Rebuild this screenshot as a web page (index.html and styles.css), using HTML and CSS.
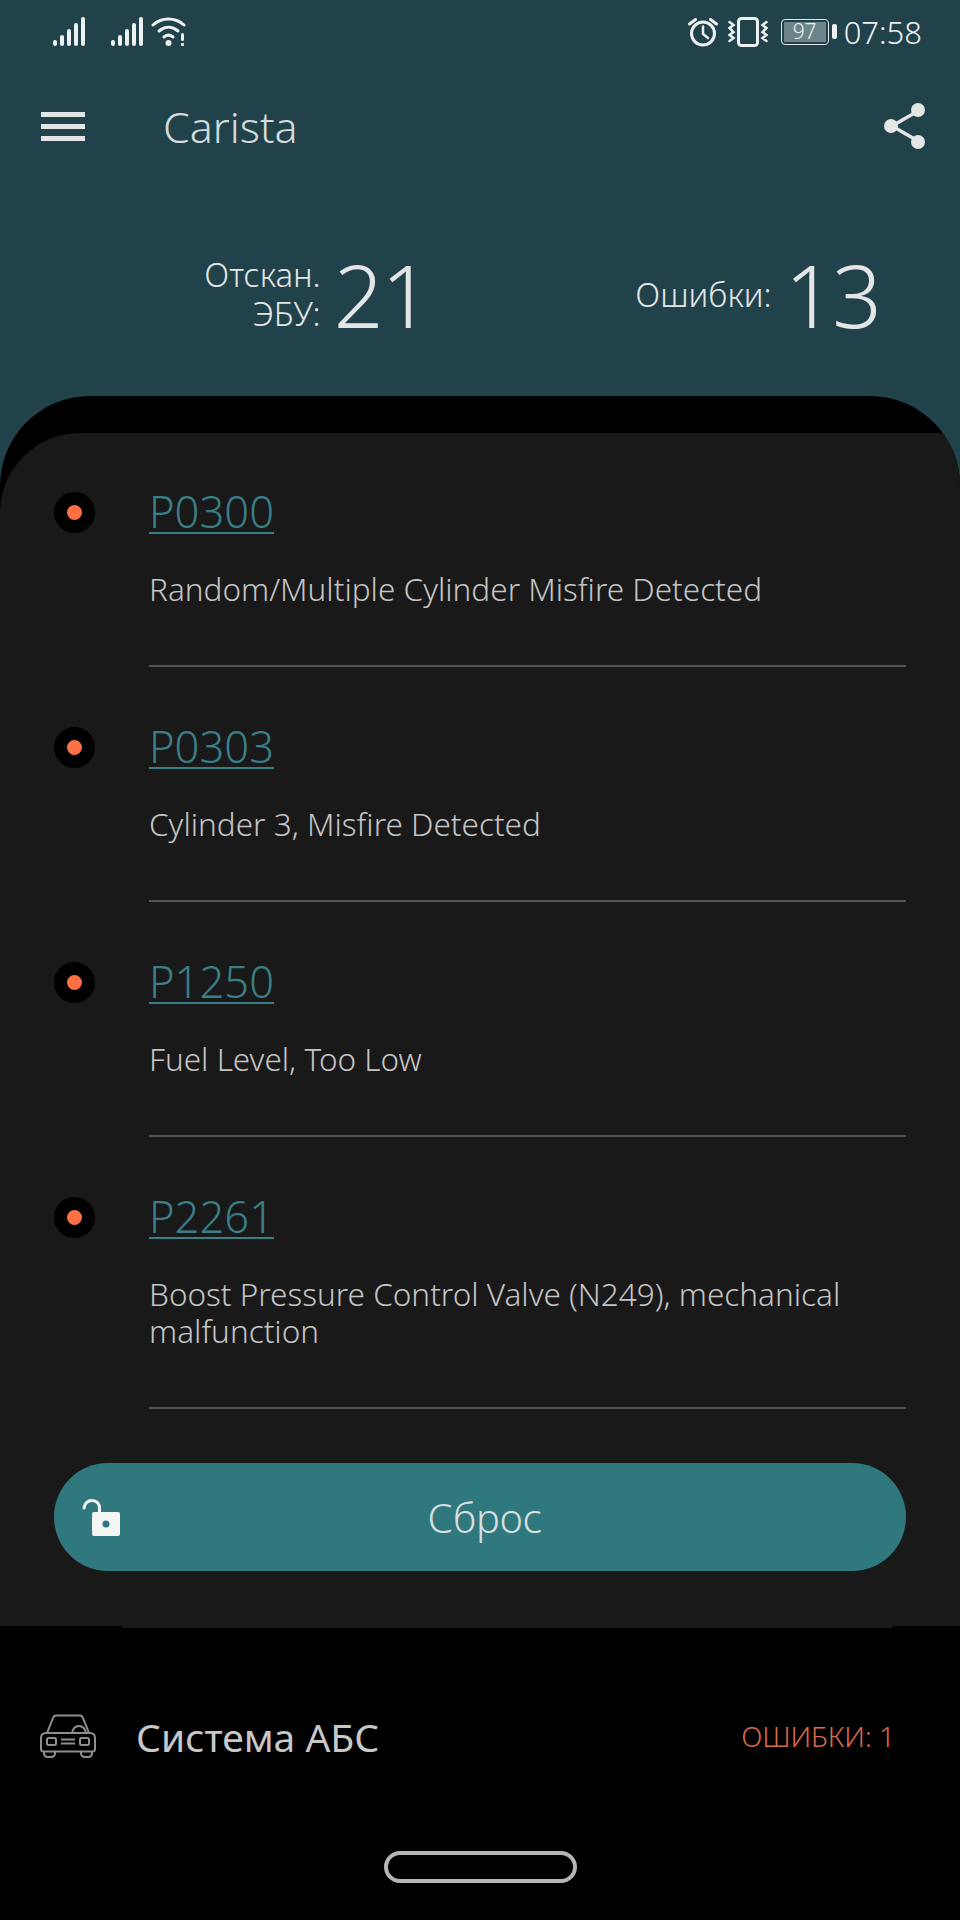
FILE: index.html
```html
<!DOCTYPE html>
<html lang="ru">
<head>
    <meta charset="UTF-8">
    <meta name="viewport" content="width=device-width, initial-scale=1.0">
    <title>Carista</title>
    <link rel="stylesheet" href="styles.css">
</head>
<body>
    <header class="top">
        <div class="status">
            <div class="status-left">
                <svg class="signal" width="32" height="30" viewBox="0 0 32 30"><g fill="#eef1f1"><rect x="0" y="23" width="4" height="6" rx="2"/><rect x="7" y="18" width="4" height="11" rx="2"/><rect x="14" y="12" width="4" height="17" rx="2"/><rect x="21" y="6" width="4" height="23" rx="2"/><rect x="28" y="0" width="4" height="29" rx="2"/></g></svg>
                <svg class="signal signal2" width="32" height="30" viewBox="0 0 32 30"><g fill="#eef1f1"><rect x="0" y="23" width="4" height="6" rx="2"/><rect x="7" y="18" width="4" height="11" rx="2"/><rect x="14" y="12" width="4" height="17" rx="2"/><rect x="21" y="6" width="4" height="23" rx="2"/><rect x="28" y="0" width="4" height="29" rx="2"/></g></svg>
                <svg class="wifi" width="36" height="30" viewBox="0 0 36 30"><g fill="none" stroke="#eef1f1" stroke-width="3" stroke-linecap="round"><path d="M2 8c9-8 22-8 31 0"/><path d="M8 14c6-5 13-5 19 0"/><path d="M13 20c3-2.500 6-2.500 9 0"/></g><circle cx="17.500" cy="26" r="3" fill="#eef1f1"/><rect x="30" y="16" width="3" height="8" rx="1.500" fill="#eef1f1"/><rect x="30" y="26" width="3" height="3" rx="1" fill="#eef1f1"/></svg>
            </div>
            <div class="status-right">
                <svg width="30" height="30" viewBox="0 0 30 30"><g fill="none" stroke="#eef1f1" stroke-linecap="round"><circle cx="15" cy="16.500" r="11.500" stroke-width="3"/><path d="M15 9.500v7.500l5 4" stroke-width="2.500"/><path d="M1.500 7l6-4.500M28.500 7l-6-4.500" stroke-width="3"/></g></svg>
                <svg class="vibrate" width="40" height="30" viewBox="0 0 40 30"><g fill="none" stroke="#eef1f1" stroke-linecap="round"><rect x="10.500" y="1.500" width="19" height="27" rx="3" stroke-width="3"/><path d="M1.500 5l4 3-4 3 4 4-4 3 4 3-4 3M38.500 5l-4 3 4 3-4 4 4 3-4 3 4 3" stroke-width="2.500"/></g></svg>
                <div class="battery"><span class="battery-level">97</span></div>
                <span class="clock">07:58</span>
            </div>
        </div>
        <div class="toolbar">
            <div class="menu"><i></i><i></i><i></i></div>
            <div class="title">Carista</div>
            <svg class="share" width="42" height="46" viewBox="0 0 42 46"><path d="M34 8L8 23l26 15" fill="none" stroke="#e4e6e6" stroke-width="3.500"/><g fill="#e4e6e6"><circle cx="34" cy="7" r="7"/><circle cx="7" cy="23" r="7"/><circle cx="34" cy="39" r="7"/></g></svg>
        </div>
        <div class="stats">
            <div class="stat stat-ecu"><span class="stat-label">Отскан.<br>ЭБУ:</span><span class="stat-num">21</span></div>
            <div class="stat stat-err"><span class="stat-label">Ошибки:</span><span class="stat-num">13</span></div>
        </div>
    </header>

    <main class="sheet">
        <div class="card">
            <div class="fault">
                <span class="dot"></span>
                <div class="fault-body">
                    <a class="code">P0300</a>
                    <p class="desc">Random/Multiple Cylinder Misfire Detected</p>
                </div>
            </div>
            <div class="fault">
                <span class="dot"></span>
                <div class="fault-body">
                    <a class="code">P0303</a>
                    <p class="desc">Cylinder 3, Misfire Detected</p>
                </div>
            </div>
            <div class="fault">
                <span class="dot"></span>
                <div class="fault-body">
                    <a class="code">P1250</a>
                    <p class="desc">Fuel Level, Too Low</p>
                </div>
            </div>
            <div class="fault">
                <span class="dot"></span>
                <div class="fault-body">
                    <a class="code">P2261</a>
                    <p class="desc">Boost Pressure Control Valve (N249), mechanical malfunction</p>
                </div>
            </div>
            <button class="reset" type="button">
                <svg class="lock" width="38" height="38" viewBox="0 0 38 38"><path d="M2 10c1-5 4-7.500 8-7.500 4.500 0 7.500 3 7.500 8v5" fill="none" stroke="#f4f5f5" stroke-width="3" stroke-linecap="round"/><path d="M12 14h24a2 2 0 0 1 2 2v20a2 2 0 0 1-2 2H12a2 2 0 0 1-2-2V16a2 2 0 0 1 2-2z" fill="#f4f5f5"/><circle cx="24" cy="26" r="3.500" fill="#2f787e"/></svg>
                Сброс
            </button>
        </div>
        <div class="card-lip"></div>
        <div class="system">
            <svg class="car" width="56" height="44" viewBox="0 0 56 44"><g fill="none" stroke="#8f8f8f" stroke-width="2"><path d="M7 19l6-15c.500-1.500 1.500-2.500 3-2.500h24c1.500 0 2.500 1 3 2.500l6 15"/><path d="M32 19c1-5 4-7 7-7s6 2 7 7"/><path d="M6 19h44c3 0 5 2 5 5v11c0 1.500-1 2.500-2.500 2.500h-49C2 37.500 1 36.500 1 35V24c0-3 2-5 5-5z"/><rect x="7" y="24" width="9" height="7" rx="1.500"/><rect x="40" y="24" width="9" height="7" rx="1.500"/><path d="M21 25.500h14M21 29.500h14"/><path d="M4 38v1c0 2.500 1.500 4 4 4h3c2.500 0 4-1.500 4-4v-1M41 38v1c0 2.500 1.500 4 4 4h3c2.500 0 4-1.500 4-4v-1"/></g></svg>
            <span class="system-name">Система АБС</span>
            <span class="system-err">ОШИБКИ: 1</span>
        </div>
        <div class="home"><span class="home-pill"></span></div>
    </main>
</body>
</html>
```
FILE: styles.css
```css
* {
    box-sizing: border-box;
}

html, body {
    margin: 0;
    height: 1920px;
}

body {
    width: 960px;
    overflow: hidden;
    background-color: #21424b;
    font-family: "Noto Sans", sans-serif;
    font-weight: 300;
}

.top {
    height: 396px;
    color: #e4e6e6;
}

.status {
    height: 94px;
    padding: 17px 38px 0 53px;
    display: flex;
    justify-content: space-between;
    align-items: flex-start;
}

.status-left, .status-right {
    display: flex;
    align-items: center;
}

.signal2 {
    margin-left: 26px;
}

.wifi {
    margin-left: 8px;
}

.status-right {
    gap: 10px;
}

.battery {
    width: 48px;
    height: 26px;
    margin-left: 3px;
    margin-right: 5px;
    padding: 2px;
    border: 1.500px solid #dfe5e5;
    border-radius: 4px;
    position: relative;
    display: flex;
}

.battery::after {
    content: "";
    position: absolute;
    right: -9px;
    top: 4px;
    width: 5px;
    height: 15px;
    border-radius: 2px;
    background-color: #eef1f1;
}

.battery-level {
    flex: 1;
    background-color: #6b8589;
    color: #e8ecec;
    font-size: 21px;
    line-height: 19px;
    text-align: center;
}

.clock {
    font-size: 31px;
    line-height: 30px;
    color: #eef1f1;
}

.toolbar {
    height: 64px;
    padding: 0 34px 0 41px;
    display: flex;
    align-items: center;
}

.menu {
    width: 44px;
    display: flex;
    flex-direction: column;
    gap: 7px;
}

.menu i {
    display: block;
    height: 5px;
    background-color: #e4e6e6;
}

.title {
    margin-left: 78px;
    font-size: 43px;
    color: #d5dbdc;
}

.share {
    margin-left: auto;
}

.stats {
    height: 100px;
    margin-top: 86px;
    display: flex;
}

.stat {
    display: flex;
    align-items: center;
    justify-content: flex-end;
    text-align: right;
}

.stat-ecu {
    width: 429px;
}

.stat-err {
    width: 451px;
}

.stat-label {
    font-size: 33px;
    line-height: 39px;
}

.stat-num {
    margin-left: 13px;
    font-size: 87px;
    letter-spacing: -2px;
    line-height: 100px;
}

.sheet {
    height: 1524px;
    background-color: #000;
    border-radius: 90px 90px 0 0;
    padding-top: 37px;
    overflow: hidden;
}

.card {
    height: 1193px;
    padding: 50px 54px 0;
    background-color: #191919;
    border-radius: 80px 0 0 0;
}

.card-lip {
    height: 2px;
    margin: 0 68px 0 122px;
    background-color: #191919;
}

.fault {
    display: flex;
}

.dot {
    width: 41px;
    height: 41px;
    margin-top: 9px;
    border: 13px solid #000;
    border-radius: 50%;
    background-color: #ff7043;
    flex-shrink: 0;
}

.fault-body {
    flex: 1;
    margin-left: 54px;
    padding-bottom: 58px;
    margin-bottom: 51px;
    border-bottom: 2px solid #555;
    min-width: 0;
}

.code {
    display: block;
    font-size: 43.500px;
    line-height: 56px;
    color: #3a7f88;
    text-decoration: underline;
    text-decoration-thickness: 2px;
    text-underline-offset: 4px;
}

.desc {
    margin: 31px 0 0;
    font-size: 31.500px;
    line-height: 37px;
    color: #c4c4c4;
}

.reset {
    width: 100%;
    height: 108px;
    margin-top: 3px;
    border: none;
    border-radius: 54px;
    background-color: #2f787e;
    color: #d6dede;
    font-family: inherit;
    font-weight: 300;
    font-size: 40px;
    position: relative;
    padding: 0 0 0 10px;
}

.lock {
    position: absolute;
    left: 28px;
    top: 35px;
}

.system {
    height: 216px;
    padding: 0 65px 0 40px;
    display: flex;
    align-items: center;
}

.system-name {
    margin-left: 40px;
    font-size: 39px;
    font-weight: 400;
    color: #c8c8c8;
}

.system-err {
    margin-left: auto;
    font-size: 28px;
    color: #d86a48;
}

.home {
    display: flex;
    justify-content: center;
    margin-top: 7px;
}

.home-pill {
    width: 193px;
    height: 32px;
    border: 4px solid #b5b5b5;
    border-radius: 16px;
}
```
